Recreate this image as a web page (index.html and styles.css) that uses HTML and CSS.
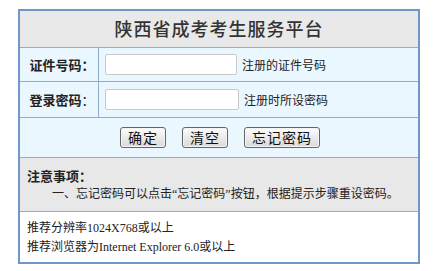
FILE: index.html
```html
<!DOCTYPE html>
<html lang="zh-CN">
<head>
  <meta charset="UTF-8">
  <title>陕西省成考考生服务平台</title>
  <link rel="stylesheet" href="styles.css">
</head>
<body>
  <div class="panel">
    <div class="title">陕西省成考考生服务平台</div>

    <!-- 证件号码 -->
    <div class="row row-first">
      <div class="label">证件号码：</div>
      <div class="field">
        <input type="text" class="txt">
        <span class="hint">注册的证件号码</span>
      </div>
    </div>

    <!-- 密码 -->
    <div class="row row-second">
      <div class="label">登录密码<span class="thin">：</span></div>
      <div class="field">
        <input type="password" class="txt txt-wide">
        <span class="hint">注册时所设密码</span>
      </div>
    </div>

    <div class="buttons">
      <button>确定</button>
      <button>清空</button>
      <button>忘记密码</button>
    </div>

    <div class="notes">
      <div class="notes-title">注意事项：</div>
      <p>一、忘记密码可以点击“忘记密码”按钮，根据提示步骤重设密码。</p>
    </div>

    <div class="footer">
      <p>推荐分辨率1024X768或以上</p>
      <p>推荐浏览器为Internet Explorer 6.0或以上</p>
    </div>
  </div>
</body>
</html>
```

FILE: styles.css
```css
* { box-sizing: border-box; }

body {
  margin: 0;
  background: #fff;
  font-family: "Liberation Serif", "Noto Sans CJK SC", serif;
  font-size: 12px;
  color: #222;
}

.panel {
  width: 402px;
  margin: 9px 0 0 18px;
  border: 2px solid #6f97c9;
}

.title {
  height: 37px;
  background: #e9e9e9;
  border-bottom: 1px solid #8eadd5;
  display: flex;
  align-items: center;
  justify-content: center;
  font-family: "Noto Sans CJK SC", sans-serif;
  font-size: 18px;
  font-weight: 500;
  letter-spacing: 1px;
  color: #333;
  padding-bottom: 3px;
}

.row {
  display: grid;
  grid-template-columns: 79px 1fr;
  background: #eaf7fe;
  border-bottom: 1px solid #8eadd5;
}

.row-first { height: 34px; }
.row-second { height: 36px; }

.label {
  border-right: 1px solid #8eadd5;
  display: flex;
  align-items: center;
  justify-content: center;
  font-family: "Noto Sans CJK SC", sans-serif;
  font-weight: bold;
  font-size: 13px;
  color: #222;
  padding-left: 6px;
}

.label .thin { font-weight: normal; }

.field {
  display: flex;
  align-items: center;
  gap: 5px;
  padding-left: 6px;
}

.txt {
  width: 132px;
  height: 21px;
  border: 1px solid #c9c9c9;
  border-radius: 2px;
  background: #fff;
  margin: 0;
}

.txt-wide { width: 134px; }

.hint {
  color: #222;
}

.buttons {
  height: 40px;
  background: #eaf7fe;
  border-bottom: 1px solid #8eadd5;
  display: flex;
  align-items: center;
  justify-content: center;
  gap: 16px;
  padding-left: 2px;
}

button {
  height: 21px;
  padding: 0 7px;
  margin: 0;
  font-family: "Noto Sans CJK SC", sans-serif;
  font-size: 14px;
  line-height: 19px;
  letter-spacing: 1px;
  color: #111;
  background: linear-gradient(#fdfdfd, #d9d9d9);
  border: 1px solid #666;
  border-radius: 3px;
  box-shadow: inset 0 0 0 1px #f4f4f4;
}

.notes {
  height: 54px;
  background: #e8e8e8;
  border-bottom: 1px solid #8eadd5;
  padding: 8px 7px 0;
}

.notes-title {
  font-family: "Noto Sans CJK SC", sans-serif;
  font-weight: bold;
  font-size: 13px;
  line-height: 19px;
}

.notes p {
  margin: 0;
  line-height: 19px;
  text-indent: 25px;
}

.footer {
  height: 50px;
  padding: 7px 7px 0;
}

.footer p {
  margin: 0;
  line-height: 19px;
}
```
